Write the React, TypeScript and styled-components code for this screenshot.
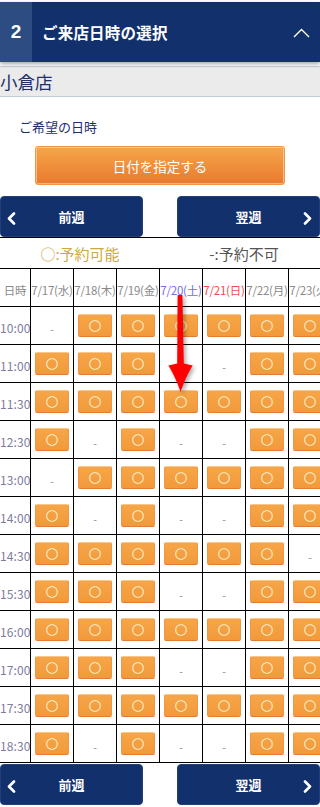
import React from "react";
import styled, { createGlobalStyle } from "styled-components";

const GlobalStyle = createGlobalStyle`
  html, body { margin: 0; padding: 0; background: #fff; }
  body {
    width: 320px;
    overflow-x: hidden;
    font-family: "Noto Sans CJK JP", "Noto Sans", sans-serif;
    color: #333;
  }
  * { box-sizing: border-box; }
`;

const Page = styled.div`
  width: 320px;
  display: flex;
  flex-direction: column;
`;

const Header = styled.header`
  margin-top: 2px;
  height: 60px;
  display: flex;
  background: #11306c;
  box-shadow: 0 2px 4px rgba(0, 0, 0, 0.35);
  position: relative;
  z-index: 1;
`;

const StepNum = styled.div`
  width: 32px;
  background: #2c4c82;
  color: #fff;
  font-family: "Liberation Sans", "Noto Sans CJK JP", sans-serif;
  font-weight: 700;
  font-size: 19px;
  display: flex;
  align-items: center;
  justify-content: center;
`;

const Title = styled.h2`
  flex: 1;
  margin: 0;
  padding-left: 10px;
  display: flex;
  align-items: center;
  color: #fff;
  font-size: 15.5px;
  font-weight: 700;
  letter-spacing: 0.2px;
`;

const Toggle = styled.svg`
  width: 34px;
  height: 60px;
  flex: none;
`;

const StoreBar = styled.div`
  margin-top: 4px;
  height: 31px;
  border-top: 1px solid #c3cbd8;
  border-bottom: 1px solid #c3cbd8;
  background: #ebebeb;
  color: #22306a;
  font-size: 17.5px;
  line-height: 29px;
`;

const FieldLabel = styled.div`
  margin-top: 20px;
  padding-left: 19px;
  font-size: 13px;
  line-height: 20px;
  color: #1c2f6b;
`;

const DateButton = styled.button`
  margin: 9px auto 0;
  width: 250px;
  height: 39px;
  border: 1px solid #f0974a;
  border-radius: 3px;
  background: linear-gradient(#f6a649, #e9792f);
  box-shadow: inset 0 0 0 1px rgba(255, 230, 190, 0.55);
  color: #fff;
  font-family: "Noto Sans CJK JP", sans-serif;
  font-size: 13.5px;
  display: flex;
  align-items: center;
  justify-content: center;
`;

const WeekNav = styled.nav<{ $top: number }>`
  margin-top: ${(p) => p.$top}px;
  display: flex;
  justify-content: space-between;
`;

const WeekButton = styled.button<{ $dir: "prev" | "next" }>`
  position: relative;
  width: 143px;
  height: 41px;
  border: 1px solid #21407a;
  border-radius: 4px;
  background: #12306c;
  color: #fff;
  font-family: "Noto Sans CJK JP", sans-serif;
  font-size: 13px;
  font-weight: 700;
  display: flex;
  align-items: center;
  justify-content: center;
  padding: 0;
  svg {
    position: absolute;
    top: 15px;
    ${(p) => (p.$dir === "prev" ? "left: 5px;" : "right: 6px;")}
  }
`;

const Legend = styled.div`
  border-top: 1px solid #000;
  height: 31px;
  display: grid;
  grid-template-columns: 1fr 1fr;
  align-items: center;
  text-align: center;
  font-size: 15px;
`;

const LegendItem = styled.span<{ $ok?: boolean }>`
  color: ${(p) => (p.$ok ? "#cfa846" : "#555")};
  ${(p) => (p.$ok ? "" : "padding-left: 8px;")}
`;

const TableWrap = styled.div`
  position: relative;
  width: 320px;
  overflow: hidden;
`;

const Table = styled.table`
  table-layout: fixed;
  width: 331px;
  border-collapse: separate;
  border-spacing: 0;
`;

const Cell = styled.td<{ $head?: boolean; $time?: boolean }>`
  box-sizing: border-box;
  width: ${(p) => (p.$time ? 31 : 43)}px;
  height: ${(p) => (p.$head ? 39 : 38)}px;
  padding: 0;
  border-right: 1px solid #000;
  border-bottom: 1px solid #000;
  ${(p) => (p.$head ? "border-top: 1px solid #000;" : "")}
  font-weight: 400;
  text-align: center;
  vertical-align: middle;
  white-space: nowrap;
  overflow: visible;
`;

const TimeText = styled.span`
  font-size: 12px;
  font-weight: 400;
  color: #7c7ca0;
  letter-spacing: 0.1px;
`;

const HeadText = styled.span<{ $tone: "weekday" | "sat" | "sun" | "label" }>`
  display: inline-block;
  margin: 0 -4px;
  font-size: 11.5px;
  font-weight: 400;
  letter-spacing: -0.2px;
  color: ${(p) =>
    p.$tone === "sat" ? "#7a68f0" : p.$tone === "sun" ? "#f24a4a" : "#8a8a8a"};
`;

const SlotButton = styled.button`
  width: 34px;
  height: 23px;
  margin: 0 auto;
  padding: 0;
  display: flex;
  align-items: center;
  justify-content: center;
  border: 1px solid #ef9647;
  border-top-color: #f9c888;
  border-bottom-color: #e57b31;
  border-radius: 2px;
  background: linear-gradient(#f5a548, #f29a3b);
  color: #fff7dc;
  font-family: "DejaVu Sans", sans-serif;
  font-size: 15px;
  line-height: 1;
`;

const Dash = styled.span`
  font-family: "Liberation Sans", sans-serif;
  font-size: 11px;
  color: #9a9a9a;
`;

const Arrow = styled.svg`
  position: absolute;
  left: 160px;
  top: 22px;
  width: 40px;
  height: 110px;
  filter: drop-shadow(2px 2px 2px rgba(0, 0, 0, 0.35));
  pointer-events: none;
`;

const days: { label: string; tone: "weekday" | "sat" | "sun" }[] = [
  { label: "7/17(水)", tone: "weekday" },
  { label: "7/18(木)", tone: "weekday" },
  { label: "7/19(金)", tone: "weekday" },
  { label: "7/20(土)", tone: "sat" },
  { label: "7/21(日)", tone: "sun" },
  { label: "7/22(月)", tone: "weekday" },
  { label: "7/23(火)", tone: "weekday" },
];

const rows: [string, string][] = [
  ["10:00", "-OOOOOO"],
  ["11:00", "OOO--OO"],
  ["11:30", "OOOOOOO"],
  ["12:30", "O-O--OO"],
  ["13:00", "-OOOOOO"],
  ["14:00", "O-O--OO"],
  ["14:30", "OOOOOO-"],
  ["15:30", "OOO--OO"],
  ["16:00", "OOOOOOO"],
  ["17:00", "OOO--OO"],
  ["17:30", "OOOOOOO"],
  ["18:30", "O-O--OO"],
];

const ChevronLeft = () => (
  <svg width="10" height="13" viewBox="0 0 10 13">
    <polyline points="8,1.5 3,6.5 8,11.5" fill="none" stroke="#fff" strokeWidth="2.6" strokeLinecap="round" strokeLinejoin="round" />
  </svg>
);

const ChevronRight = () => (
  <svg width="10" height="13" viewBox="0 0 10 13">
    <polyline points="2,1.5 7,6.5 2,11.5" fill="none" stroke="#fff" strokeWidth="2.6" strokeLinecap="round" strokeLinejoin="round" />
  </svg>
);

const WeekButtons = ({ top }: { top: number }) => (
  <WeekNav $top={top}>
    <WeekButton $dir="prev">
      <ChevronLeft />
      前週
    </WeekButton>
    <WeekButton $dir="next">
      翌週
      <ChevronRight />
    </WeekButton>
  </WeekNav>
);

export default function App() {
  return (
    <Page>
      <GlobalStyle />
      <Header>
        <StepNum>2</StepNum>
        <Title>ご来店日時の選択</Title>
        <Toggle viewBox="0 0 34 60">
          <polyline points="8,35 15.5,27.5 23,35" fill="none" stroke="#fff" strokeWidth="1.4" />
        </Toggle>
      </Header>
      <StoreBar>小倉店</StoreBar>
      <FieldLabel>ご希望の日時</FieldLabel>
      <DateButton>日付を指定する</DateButton>
      <WeekButtons top={11} />
      <Legend>
        <LegendItem $ok>○:予約可能</LegendItem>
        <LegendItem>-:予約不可</LegendItem>
      </Legend>
      <TableWrap>
        <Table>
          <thead>
            <tr>
              <Cell as="th" $head $time>
                <HeadText $tone="label">日時</HeadText>
              </Cell>
              {days.map((d) => (
                <Cell as="th" $head key={d.label}>
                  <HeadText $tone={d.tone}>{d.label}</HeadText>
                </Cell>
              ))}
            </tr>
          </thead>
          <tbody>
            {rows.map(([time, slots]) => (
              <tr key={time}>
                <Cell $time>
                  <TimeText>{time}</TimeText>
                </Cell>
                {slots.split("").map((s, i) => (
                  <Cell key={i}>
                    {s === "O" ? <SlotButton>○</SlotButton> : <Dash>-</Dash>}
                  </Cell>
                ))}
              </tr>
            ))}
          </tbody>
        </Table>
        <Arrow viewBox="0 0 40 110">
          <path
            d="M17.6 5 L22.4 5 L23.8 73.5 L32.6 75.5 Q25.5 87 20.6 102 Q15.6 87 8.4 75.5 L17.2 73.5 Z"
            fill="#ff0000"
          />
        </Arrow>
      </TableWrap>
      <WeekButtons top={1} />
    </Page>
  );
}
